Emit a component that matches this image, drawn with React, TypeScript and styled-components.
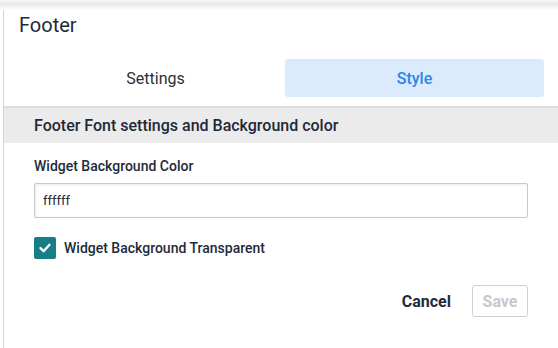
import React, { useState } from 'react'
import styled, { createGlobalStyle } from 'styled-components'

const GlobalStyle = createGlobalStyle`
  html, body {
    margin: 0;
    padding: 0;
    background: #ffffff;
    font-family: Roboto, "Liberation Sans", Arial, sans-serif;
  }
`

const Page = styled.div`
  width: 558px;
  height: 348px;
  overflow: hidden;
  position: relative;
  background: #ffffff;
`

const TopShade = styled.div`
  height: 10px;
  background: linear-gradient(to bottom, #f7f7f7 0%, #e9e9e9 40%, #f6f6f6 80%, #ffffff 100%);
`

const Panel = styled.div`
  margin-left: 3px;
  border-left: 1px solid #d4d4d4;
  height: 338px;
  display: flex;
  flex-direction: column;
`

const Title = styled.h2`
  margin: 0;
  padding: 3px 0 0 15px;
  height: 29px;
  font-size: 20px;
  font-weight: 400;
  color: #222b38;
  line-height: 24px;
`

const TabRow = styled.div`
  display: grid;
  grid-template-columns: 1fr 1fr;
  margin: 17px 14px 0 22px;
  height: 38px;
`

const Tab = styled.button<{ active?: boolean }>`
  border: none;
  border-radius: 3px;
  font-family: inherit;
  font-size: 16px;
  font-weight: ${p => (p.active ? 500 : 400)};
  color: ${p => (p.active ? '#2a86ee' : '#2b2f36')};
  background: ${p => (p.active ? '#dbeafc' : 'transparent')};
  cursor: pointer;
`

const SectionHeader = styled.div`
  margin-top: 9px;
  border-top: 2px solid #dddddd;
  background: #ebebeb;
  height: 35px;
  display: flex;
  align-items: center;
  padding-left: 30px;
  font-size: 16px;
  font-weight: 500;
  color: #1f2836;
`

const Body = styled.div`
  padding: 0 26px 0 30px;
  display: flex;
  flex-direction: column;
`

const Label = styled.label`
  margin-top: 15px;
  font-size: 14px;
  font-weight: 500;
  color: #222b38;
  line-height: 17px;
`

const Input = styled.input`
  margin-top: 8px;
  box-sizing: border-box;
  width: 494px;
  height: 35px;
  border: 1px solid #c9c9c9;
  border-radius: 2px;
  box-shadow: inset 1px 1px 3px rgba(0, 0, 0, 0.08);
  padding: 0 8px;
  font-family: inherit;
  font-size: 13px;
  color: #222b38;
  outline: none;
`

const CheckRow = styled.label`
  margin-top: 19px;
  display: flex;
  align-items: center;
  gap: 8px;
  font-size: 14px;
  font-weight: 500;
  color: #222b38;
  cursor: pointer;
`

const CheckBox = styled.span<{ checked: boolean }>`
  width: 22px;
  height: 22px;
  border-radius: 2px;
  background: ${p => (p.checked ? '#177e85' : '#ffffff')};
  border: ${p => (p.checked ? 'none' : '1px solid #aaa')};
  display: flex;
  align-items: center;
  justify-content: center;
`

const Actions = styled.div`
  margin-top: 26px;
  display: flex;
  justify-content: flex-end;
  align-items: center;
  gap: 21px;
  width: 494px;
`

const CancelButton = styled.button`
  border: none;
  background: none;
  padding: 0;
  font-family: inherit;
  font-size: 16px;
  font-weight: 700;
  color: #1f2a3c;
  cursor: pointer;
`

const SaveButton = styled.button`
  box-sizing: border-box;
  width: 56px;
  height: 32px;
  border: 1px solid #cfd0d4;
  border-radius: 3px;
  background: #ffffff;
  font-family: inherit;
  font-size: 16px;
  font-weight: 700;
  color: #c6c8ce;
`

export default function App() {
  const [tab, setTab] = useState('style')
  const [transparent, setTransparent] = useState(true)
  return (
    <Page>
      <GlobalStyle />
      <TopShade />
      <Panel>
        <Title>Footer</Title>
        <TabRow>
          <Tab active={tab === 'settings'} onClick={() => setTab('settings')}>
            Settings
          </Tab>
          <Tab active={tab === 'style'} onClick={() => setTab('style')}>
            Style
          </Tab>
        </TabRow>
        <SectionHeader>Footer Font settings and Background color</SectionHeader>
        <Body>
          <Label>Widget Background Color</Label>
          <Input defaultValue="ffffff" />
          <CheckRow onClick={() => setTransparent(!transparent)}>
            <CheckBox checked={transparent}>
              {transparent && (
                <svg width="14" height="14" viewBox="0 0 14 14">
                  <path d="M2.5 7.2 L5.6 10.2 L11.5 3.8" fill="none" stroke="#fff" strokeWidth="2.4" strokeLinecap="round" strokeLinejoin="round" />
                </svg>
              )}
            </CheckBox>
            Widget Background Transparent
          </CheckRow>
          <Actions>
            <CancelButton>Cancel</CancelButton>
            <SaveButton disabled>Save</SaveButton>
          </Actions>
        </Body>
      </Panel>
    </Page>
  )
}
